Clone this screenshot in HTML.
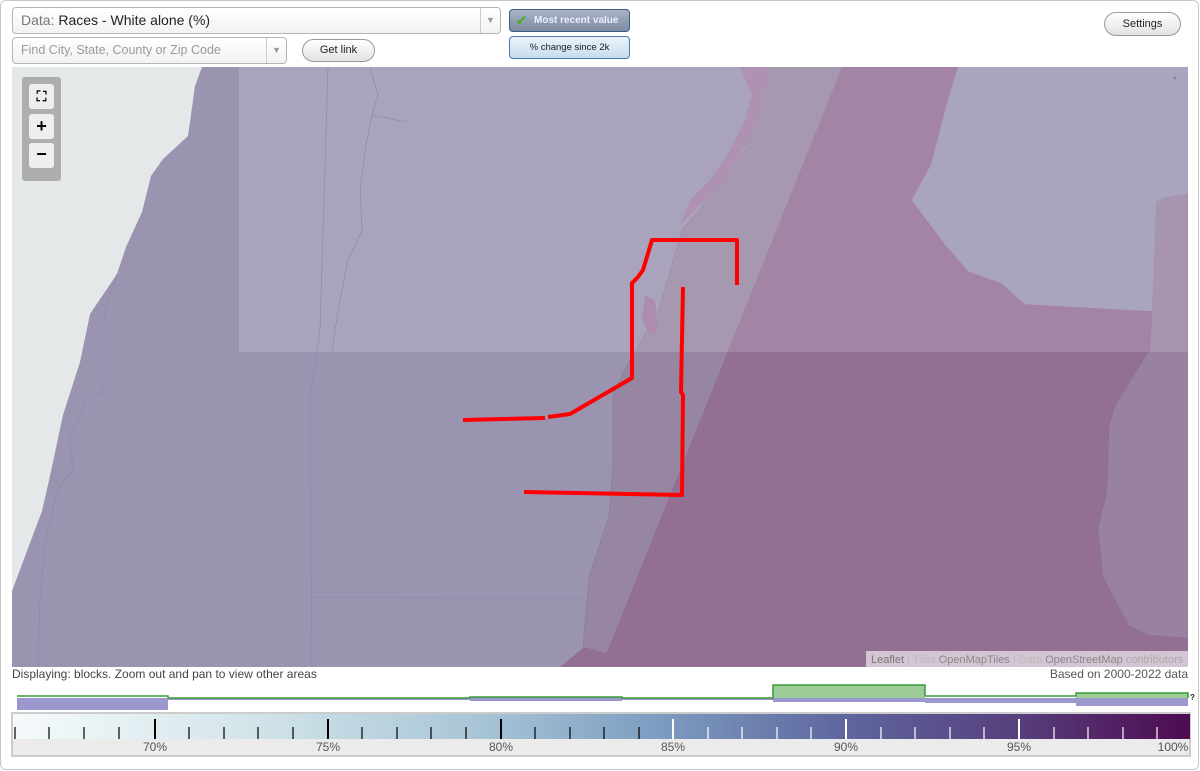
<!DOCTYPE html>
<html><head><meta charset="utf-8"><style>
*{box-sizing:border-box}
body{margin:0;width:1200px;height:771px;background:#fff;font-family:"Liberation Sans",sans-serif;position:relative;overflow:hidden}
.frame{position:absolute;left:0;top:0;width:1199px;height:770px;border:1px solid #c8c8c8;border-radius:6px}
.abs{position:absolute}
.sel{left:12px;top:7px;width:489px;height:27px;border:1px solid #b5b5b5;border-radius:4px;background:linear-gradient(#fff,#f2f2f2);font-size:14px;line-height:25px;padding-left:8px;color:#222}
.sel .arr,.srch .arr{position:absolute;right:0;top:0;width:20px;height:100%;border-left:1px solid #ccc;color:#999;font-size:9px;text-align:center}
.srch{left:12px;top:37px;width:275px;height:27px;border:1px solid #b5b5b5;border-radius:4px;background:linear-gradient(#fff,#f2f2f2);font-size:12.5px;line-height:25px;padding-left:8px;color:#999}
.btn{border:1px solid #999;border-radius:12px;background:linear-gradient(#fff,#e2e2e2);font-size:11px;text-align:center;color:#222}
</style></head><body>
<div class="frame"></div>
<div class="abs sel"><span style="color:#777">Data:</span> Races - White alone (%)<span class="arr" style="line-height:25px">▼</span></div>
<div class="abs srch">Find City, State, County or Zip Code<span class="arr" style="line-height:25px">▼</span></div>
<div class="abs btn" style="left:302px;top:39px;width:73px;height:23px;line-height:21px">Get link</div>
<div class="abs" style="left:509px;top:9px;width:121px;height:23px;border:1px solid #3a5a8a;border-radius:4px;background:linear-gradient(#a8b4c6,#7d8aa0);color:#eef;font-size:10px;font-weight:bold;line-height:21px;padding-left:24px"><span style="position:absolute;left:6px;top:0;color:#5a3;font-size:13px">✔</span>Most recent value</div>
<div class="abs" style="left:509px;top:36px;width:121px;height:23px;border:1px solid #4a78b0;border-radius:4px;background:linear-gradient(#eaf3fb,#c8dcee);color:#222;font-size:9.5px;line-height:21px;text-align:center">% change since 2k</div>
<div class="abs btn" style="left:1104px;top:12px;width:77px;height:24px;line-height:22px">Settings</div>

<svg class="abs" style="left:12px;top:67px" width="1176" height="600" viewBox="12 67 1176 600">
<rect x="12" y="67" width="1176" height="600" fill="#e4e8e9"/>
<polygon fill="#9a94b1" points="202,67 195,86 188,136 163,159 151,176 142,212 126,247 117,274 90,314 80,362 63,415 50,476 42,511 12,591 12,667 1188,667 1188,67"/>
<polygon fill="#9786a1" stroke="#8a7a9a" stroke-width="0.6" points="764,67 764,79 752,116 746,149 723,181 682,230 658,312 625,369 613,394 613,463 609,516 589,577 584,634 583,667 620,667 842,67"/>
<polygon fill="#946f94" points="584,647 619,657 601,667 560,667"/>
<polygon fill="#946f94" points="842,67 958,67 946,108 931,165 912,200 944,243 968,271 1001,283 1025,304 1152,311 1150,349 1115,406 1109,426 1107,491 1098,528 1103,577 1129,626 1148,635 1188,638 1188,667 601,667"/>
<polygon fill="#9882a0" stroke="#8a7098" stroke-width="0.6" points="1152,311 1156,202 1162,198 1188,193 1188,638 1148,635 1129,626 1103,577 1098,528 1107,491 1109,426 1115,406 1150,349"/>
<polygon fill="#9c96b4" stroke="#9b8fb0" stroke-width="0.6" points="958,67 1188,67 1188,193 1162,198 1156,202 1152,311 1025,304 1001,283 968,271 944,243 912,200 931,165 946,108"/>
<polygon fill="#a27fa4" points="740,67 770,67 765,90 755,130 740,155 720,185 700,205 680,225 690,200 710,180 730,150 745,120 752,95"/>
<polygon fill="#9e7aa0" points="645,295 655,300 658,330 650,335 642,320"/>
<rect x="239" y="67" width="949" height="285" fill="#fff" fill-opacity="0.15"/>
<g fill="none" stroke="#8d86a8" stroke-width="0.8" opacity="0.8">
<path d="M328,67 L320,330 L310,400 L312,667"/><path d="M310,597 L583,599"/><path d="M370,67 L378,95 L372,115 L366,145 L360,190 L362,230 L348,260 L340,300 L332,350"/><path d="M372,115 L407,122"/>
<path d="M117,274 L104,314 L104,390 L85,400 L70,440 L73,470 L60,485 L55,500 L45,545 L40,600 L38,667"/>
<path d="M50,476 L60,485"/>
</g>
<g fill="none" stroke="#f00" stroke-width="4" stroke-linejoin="round">
<polyline points="463,420 545,418"/><polyline points="548,417 570,414 632,378 632,283 638,277 643,270 652,240 737,240 737,285"/>
<polyline points="683,287 681,392 683,395 682,495 524,492"/>
</g>
<rect x="866" y="651" width="322" height="16" fill="#fff" fill-opacity="0.6"/>
<text x="871" y="663" font-size="11" font-family="Liberation Sans" fill="#888"><tspan fill="#777">Leaflet</tspan> <tspan fill="#bbb">| Tiles</tspan> <tspan fill="#888">OpenMapTiles</tspan> <tspan fill="#bbb">| Data</tspan> <tspan fill="#888">OpenStreetMap</tspan> <tspan fill="#aaa">contributors</tspan></text>
<circle cx="1175" cy="78" r="1.5" fill="#888"/>
</svg>

<div class="abs" style="left:22px;top:77px;width:39px;height:104px;background:#aeaeae;border-radius:3px"></div>
<div class="abs" style="left:29px;top:84px;width:25px;height:25px;background:#eee;border-radius:3px;text-align:center;font-size:14px;line-height:25px;font-weight:bold">⛶</div>
<div class="abs" style="left:29px;top:114px;width:25px;height:25px;background:#eee;border-radius:3px;text-align:center;font-size:18px;line-height:24px;font-weight:bold">+</div>
<div class="abs" style="left:29px;top:143px;width:25px;height:25px;background:#eee;border-radius:3px;text-align:center;font-size:18px;line-height:23px;font-weight:bold">−</div>

<div class="abs" style="left:12px;top:667px;font-size:12px;color:#444">Displaying: blocks. Zoom out and pan to view other areas</div>
<div class="abs" style="right:12px;top:667px;font-size:12px;color:#555">Based on 2000-2022 data</div>

<svg class="abs" style="left:0;top:680px" width="1200" height="32">
<g fill="#9a98cc">
<rect x="17" y="18" width="151" height="12"/><rect x="168" y="18" width="302" height="2"/><rect x="470" y="17" width="152" height="4"/><rect x="622" y="18" width="151" height="2"/><rect x="773" y="18" width="152" height="4"/><rect x="925" y="18" width="151" height="5"/><rect x="1076" y="18" width="112" height="8"/>
</g>
<rect x="773" y="5" width="152" height="13" fill="#9ccc98"/><rect x="1076" y="13" width="112" height="5" fill="#9ccc98"/>
<polyline fill="none" stroke="#3a9a3a" stroke-width="1.5" points="17,16 168,16 168,18 470,18 470,17 622,17 622,18 773,18 773,5 925,5 925,16 1076,16 1076,13 1188,13 1188,18"/>
<text x="1190" y="20" font-size="8" font-weight="bold" fill="#222">?</text>
</svg>

<div class="abs" style="left:11px;top:712px;width:1180px;height:45px;border:2px solid #ccc;background:#ebebeb"></div>
<svg class="abs" style="left:13px;top:714px" width="1177" height="41">
<defs><linearGradient id="g" x1="0" x2="1"><stop offset="0" stop-color="#f5fafb"/><stop offset="0.2" stop-color="#d3e5ea"/><stop offset="0.4" stop-color="#a7c4d6"/><stop offset="0.55" stop-color="#7d9cc0"/><stop offset="0.7" stop-color="#5f689f"/><stop offset="0.85" stop-color="#57407e"/><stop offset="1" stop-color="#4e0a50"/></linearGradient></defs>
<rect width="1177" height="25" fill="url(#g)"/>
<g font-size="12" fill="#555" font-family="Liberation Sans" text-anchor="middle">
<text x="142" y="37">70%</text><text x="315" y="37">75%</text><text x="488" y="37">80%</text><text x="660" y="37">85%</text><text x="833" y="37">90%</text><text x="1006" y="37">95%</text><text x="1160" y="37">100%</text></g>
<g stroke-width="1.2">
<line x1="2" y1="13" x2="2" y2="25" stroke="#000"/><line x1="36" y1="13" x2="36" y2="25" stroke="#000"/><line x1="71" y1="13" x2="71" y2="25" stroke="#000"/><line x1="106" y1="13" x2="106" y2="25" stroke="#000"/>
<line x1="142" y1="5" x2="142" y2="25" stroke="#000" stroke-width="2"/>
<line x1="176" y1="13" x2="176" y2="25" stroke="#000"/><line x1="211" y1="13" x2="211" y2="25" stroke="#000"/><line x1="245" y1="13" x2="245" y2="25" stroke="#000"/><line x1="280" y1="13" x2="280" y2="25" stroke="#000"/>
<line x1="315" y1="5" x2="315" y2="25" stroke="#000" stroke-width="2"/>
<line x1="349" y1="13" x2="349" y2="25" stroke="#000"/><line x1="384" y1="13" x2="384" y2="25" stroke="#000"/><line x1="418" y1="13" x2="418" y2="25" stroke="#000"/><line x1="453" y1="13" x2="453" y2="25" stroke="#000"/>
<line x1="488" y1="5" x2="488" y2="25" stroke="#000" stroke-width="2"/>
<line x1="522" y1="13" x2="522" y2="25" stroke="#000"/><line x1="557" y1="13" x2="557" y2="25" stroke="#000"/><line x1="591" y1="13" x2="591" y2="25" stroke="#000"/><line x1="626" y1="13" x2="626" y2="25" stroke="#000"/>
<line x1="660" y1="5" x2="660" y2="25" stroke="#fff" stroke-width="2"/>
<line x1="695" y1="13" x2="695" y2="25" stroke="#fff"/><line x1="729" y1="13" x2="729" y2="25" stroke="#fff"/><line x1="764" y1="13" x2="764" y2="25" stroke="#fff"/><line x1="798" y1="13" x2="798" y2="25" stroke="#fff"/>
<line x1="833" y1="5" x2="833" y2="25" stroke="#fff" stroke-width="2"/>
<line x1="868" y1="13" x2="868" y2="25" stroke="#fff"/><line x1="902" y1="13" x2="902" y2="25" stroke="#fff"/><line x1="937" y1="13" x2="937" y2="25" stroke="#fff"/><line x1="971" y1="13" x2="971" y2="25" stroke="#fff"/>
<line x1="1006" y1="5" x2="1006" y2="25" stroke="#fff" stroke-width="2"/>
<line x1="1041" y1="13" x2="1041" y2="25" stroke="#fff"/><line x1="1075" y1="13" x2="1075" y2="25" stroke="#fff"/><line x1="1110" y1="13" x2="1110" y2="25" stroke="#fff"/><line x1="1144" y1="13" x2="1144" y2="25" stroke="#fff"/>
</g>
</svg>
</body></html>
